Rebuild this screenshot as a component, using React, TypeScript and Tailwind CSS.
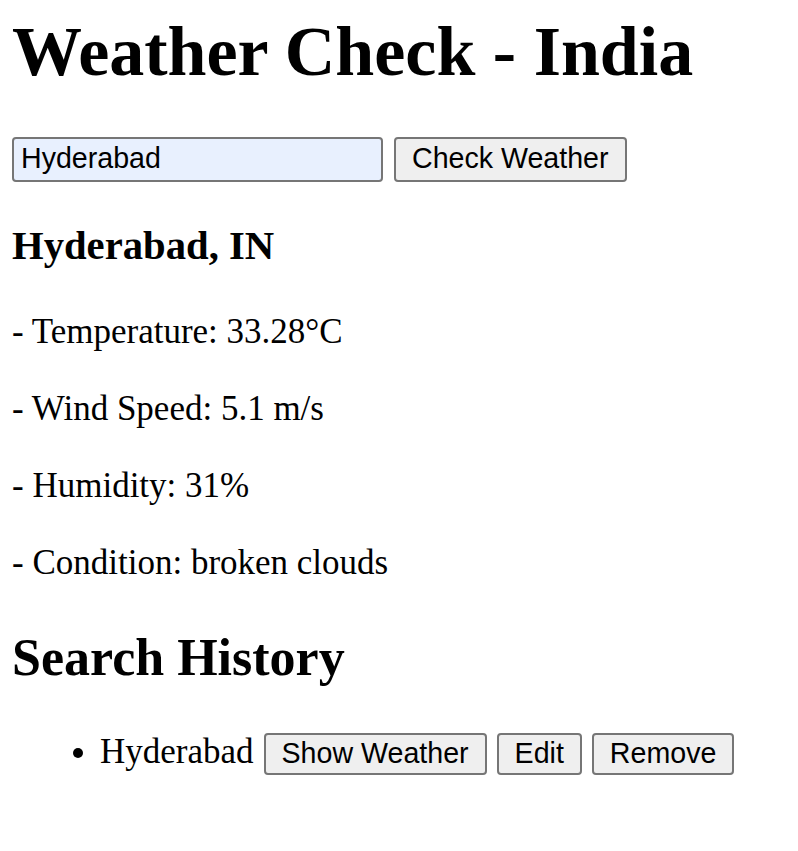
import React from "react";

const serif = "font-['Times_New_Roman','Liberation_Serif',serif]";
const sans = "font-['Arial','Liberation_Sans',sans-serif]";

const stats = [
  "- Temperature: 33.28°C",
  "- Wind Speed: 5.1 m/s",
  "- Humidity: 31%",
  "- Condition: broken clouds",
];

const btn =
  "inline-block rounded-[4px] border-2 border-[#767676] bg-[#efefef] px-[16px] text-[28.6px] leading-[33px] text-black " +
  sans;

const App = () => {
  return (
    <div className={`min-h-screen bg-white px-[12px] pt-[11.5px] text-black ${serif}`}>
      <h1 className="text-[70px] font-bold leading-[80px]">Weather Check - India</h1>

      <div className="mt-[45.5px] flex items-start gap-[11px]">
        <input
          defaultValue="Hyderabad"
          className={`w-[371px] rounded-[4px] border-2 border-[#767676] bg-[#e8f0fe] px-[7px] pt-[3px] pb-[5px] text-[28.6px] leading-[33px] text-black outline-none ${sans}`}
        />
        <button className={`${btn} pt-[3px] pb-[5px]`}>Check Weather</button>
      </div>

      <h3 className="mt-[39.5px] text-[40.7px] font-bold leading-[47px]">Hyderabad, IN</h3>

      <div className="mt-[43px] flex flex-col gap-[37px]">
        {stats.map((s) => (
          <p key={s} className="text-[35px] leading-[40px]">
            {s}
          </p>
        ))}
      </div>

      <h2 className="mt-[45.5px] text-[52px] font-bold leading-[60px]">Search History</h2>

      <ul className="mt-[44px] list-disc pl-[88px]">
        <li className="text-[35px] leading-[40px]">
          Hyderabad
          <button className={`${btn} ml-[10px] pt-[2.5px] pb-[2.5px]`}>Show Weather</button>
          <button className={`${btn} ml-[10px] pt-[2.5px] pb-[2.5px]`}>Edit</button>
          <button className={`${btn} ml-[10px] pt-[2.5px] pb-[2.5px]`}>Remove</button>
        </li>
      </ul>
    </div>
  );
};

export default App;
